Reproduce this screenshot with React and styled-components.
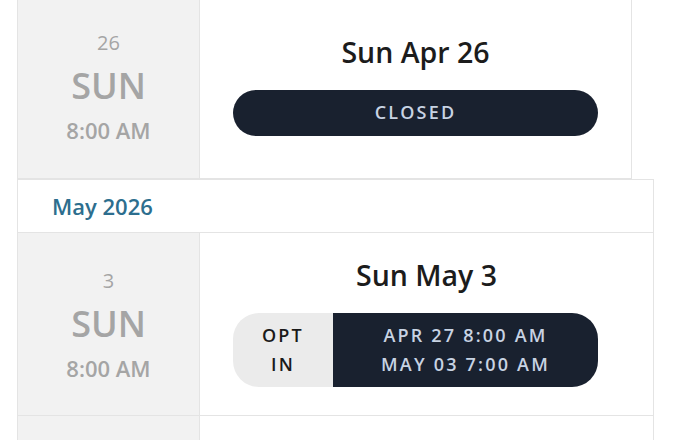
import React from "react";
import styled, { createGlobalStyle } from "styled-components";

const GlobalStyle = createGlobalStyle`
  html, body { margin: 0; padding: 0; background: #ffffff; }
  body { font-family: "Open Sans", "Noto Sans", sans-serif; overflow: hidden; }
  * { box-sizing: border-box; }
`;

const Page = styled.div`
  width: 696px;
  height: 440px;
  overflow: hidden;
  padding-left: 17px;
`;

const List = styled.div`
  display: flex;
  flex-direction: column;
  margin-top: -5px;
`;

const Card = styled.div`
  display: grid;
  grid-template-columns: 182px 1fr;
  width: ${(p) => p.$width}px;
  min-height: ${(p) => p.$height || 183}px;
  border: 1px solid #e4e4e4;
  border-top: none;
  background: #ffffff;
`;

const DateCol = styled.div`
  display: flex;
  flex-direction: column;
  align-items: center;
  padding: 36px 0 31px;
  background: #f2f2f2;
  border-right: 1px solid #e4e4e4;
  color: #a5a5a5;
`;

const DayNum = styled.div`
  font-size: 20px;
  line-height: 24px;
  margin-bottom: 9px;
`;

const DayName = styled.div`
  font-size: 36px;
  line-height: 44px;
  font-weight: 600;
  margin-bottom: 7px;
`;

const DayTime = styled.div`
  font-size: 22px;
  line-height: 30px;
  font-weight: 600;
`;

const Main = styled.div`
  display: flex;
  flex-direction: column;
  justify-content: center;
  padding: 0 33px 4px;
`;

const Title = styled.div`
  font-size: 28.5px;
  line-height: 36px;
  font-weight: 600;
  color: #1c1c1c;
  text-align: center;
  margin-bottom: 20px;
`;

const Pill = styled.div`
  width: 365px;
  min-height: 46px;
  border-radius: 26px;
  overflow: hidden;
  display: grid;
  grid-template-columns: ${(p) => (p.$split ? "100px 1fr" : "1fr")};
`;

const PillPart = styled.div`
  display: flex;
  flex-direction: column;
  align-items: center;
  justify-content: center;
  padding: ${(p) => (p.$tall ? "8px 0" : "0")};
  background: ${(p) => (p.$light ? "#ebebeb" : "#19212f")};
  color: ${(p) => (p.$light ? "#1a1a1a" : "#c8d3e3")};
  font-size: 18px;
  line-height: 29px;
  font-weight: 600;
  letter-spacing: 2.2px;
  text-align: center;
`;

const MonthHeader = styled.div`
  width: 637px;
  height: 54px;
  display: flex;
  align-items: center;
  padding-left: 34px;
  border: 1px solid #e4e4e4;
  color: #2d6e8e;
  font-size: 22px;
  font-weight: 600;
`;

export default function App() {
  return (
    <Page>
      <GlobalStyle />
      <List>
        <Card $width={615} $height={184}>
          <DateCol>
            <DayNum>26</DayNum>
            <DayName>SUN</DayName>
            <DayTime>8:00 AM</DayTime>
          </DateCol>
          <Main>
            <Title>Sun Apr 26</Title>
            <Pill>
              <PillPart>CLOSED</PillPart>
            </Pill>
          </Main>
        </Card>
        <MonthHeader>May 2026</MonthHeader>
        <Card $width={637} $height={183}>
          <DateCol>
            <DayNum>3</DayNum>
            <DayName>SUN</DayName>
            <DayTime>8:00 AM</DayTime>
          </DateCol>
          <Main>
            <Title>Sun May 3</Title>
            <Pill $split>
              <PillPart $light $tall>
                <span>OPT</span>
                <span>IN</span>
              </PillPart>
              <PillPart $tall>
                <span>APR 27 8:00 AM</span>
                <span>MAY 03 7:00 AM</span>
              </PillPart>
            </Pill>
          </Main>
        </Card>
        <Card $width={637} $height={183}>
          <DateCol />
          <Main />
        </Card>
      </List>
    </Page>
  );
}
